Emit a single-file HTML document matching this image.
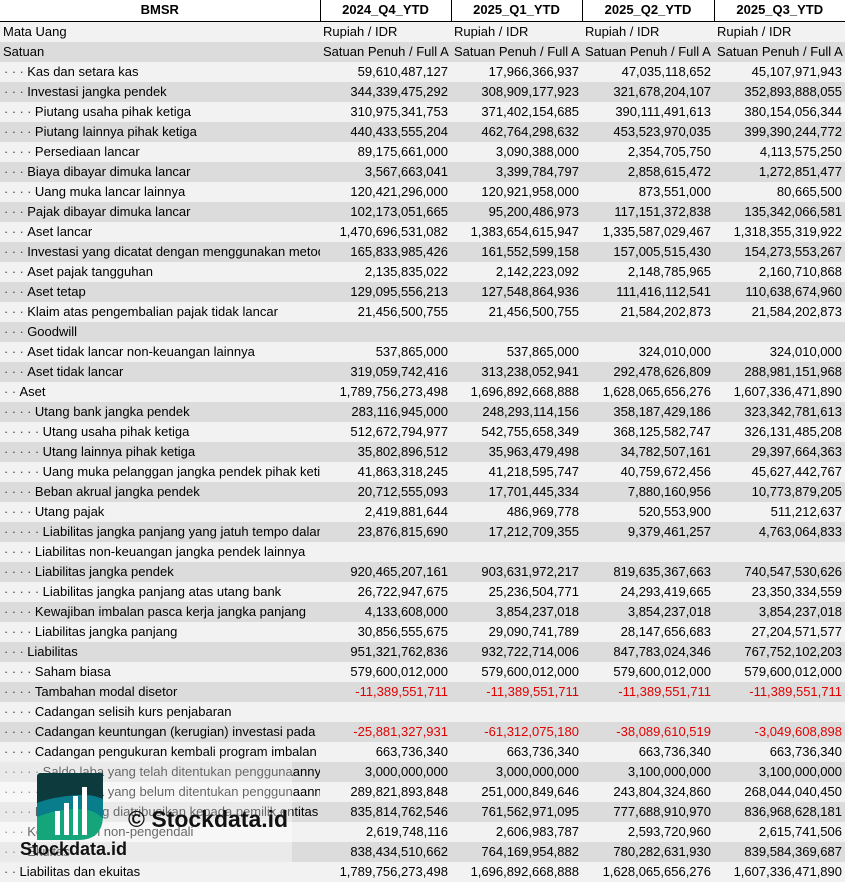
<!DOCTYPE html>
<html><head><meta charset="utf-8"><style>
*{margin:0;padding:0;box-sizing:border-box}
body{width:845px;height:881px;overflow:hidden;background:#fff;font-family:"Liberation Sans",sans-serif;font-size:13px;color:#000;position:relative}
table{border-collapse:collapse;table-layout:fixed;width:845px}
td,th{height:20px;white-space:nowrap;overflow:hidden;padding:0 3px;line-height:20px}
th{font-weight:bold;text-align:center;border-left:1.5px solid #000;border-bottom:1.5px solid #000;height:21px;background:#fff}
th:first-child{border-left:none}
td.n{text-align:right}
tr:nth-child(even) td{background:#f2f2f2}
tr:nth-child(odd) td{background:#dcdcdc}
.r{color:#e00000}
.d{display:inline-block;letter-spacing:3.4px;color:#444;margin-left:1px}
</style></head><body>
<table>
<colgroup><col style="width:320px"><col style="width:131px"><col style="width:131px"><col style="width:132px"><col style="width:131px"></colgroup>
<tr><th>BMSR</th><th>2024_Q4_YTD</th><th>2025_Q1_YTD</th><th>2025_Q2_YTD</th><th>2025_Q3_YTD</th></tr>
<tr><td>Mata Uang</td><td>Rupiah / IDR</td><td>Rupiah / IDR</td><td>Rupiah / IDR</td><td>Rupiah / IDR</td></tr>
<tr><td>Satuan</td><td>Satuan Penuh / Full A</td><td>Satuan Penuh / Full A</td><td>Satuan Penuh / Full A</td><td>Satuan Penuh / Full A</td></tr>
<tr><td><span class="d">···</span>Kas dan setara kas</td><td class="n">59,610,487,127</td><td class="n">17,966,366,937</td><td class="n">47,035,118,652</td><td class="n">45,107,971,943</td></tr>
<tr><td><span class="d">···</span>Investasi jangka pendek</td><td class="n">344,339,475,292</td><td class="n">308,909,177,923</td><td class="n">321,678,204,107</td><td class="n">352,893,888,055</td></tr>
<tr><td><span class="d">····</span>Piutang usaha pihak ketiga</td><td class="n">310,975,341,753</td><td class="n">371,402,154,685</td><td class="n">390,111,491,613</td><td class="n">380,154,056,344</td></tr>
<tr><td><span class="d">····</span>Piutang lainnya pihak ketiga</td><td class="n">440,433,555,204</td><td class="n">462,764,298,632</td><td class="n">453,523,970,035</td><td class="n">399,390,244,772</td></tr>
<tr><td><span class="d">····</span>Persediaan lancar</td><td class="n">89,175,661,000</td><td class="n">3,090,388,000</td><td class="n">2,354,705,750</td><td class="n">4,113,575,250</td></tr>
<tr><td><span class="d">···</span>Biaya dibayar dimuka lancar</td><td class="n">3,567,663,041</td><td class="n">3,399,784,797</td><td class="n">2,858,615,472</td><td class="n">1,272,851,477</td></tr>
<tr><td><span class="d">····</span>Uang muka lancar lainnya</td><td class="n">120,421,296,000</td><td class="n">120,921,958,000</td><td class="n">873,551,000</td><td class="n">80,665,500</td></tr>
<tr><td><span class="d">···</span>Pajak dibayar dimuka lancar</td><td class="n">102,173,051,665</td><td class="n">95,200,486,973</td><td class="n">117,151,372,838</td><td class="n">135,342,066,581</td></tr>
<tr><td><span class="d">···</span>Aset lancar</td><td class="n">1,470,696,531,082</td><td class="n">1,383,654,615,947</td><td class="n">1,335,587,029,467</td><td class="n">1,318,355,319,922</td></tr>
<tr><td><span class="d">···</span>Investasi yang dicatat dengan menggunakan metode</td><td class="n">165,833,985,426</td><td class="n">161,552,599,158</td><td class="n">157,005,515,430</td><td class="n">154,273,553,267</td></tr>
<tr><td><span class="d">···</span>Aset pajak tangguhan</td><td class="n">2,135,835,022</td><td class="n">2,142,223,092</td><td class="n">2,148,785,965</td><td class="n">2,160,710,868</td></tr>
<tr><td><span class="d">···</span>Aset tetap</td><td class="n">129,095,556,213</td><td class="n">127,548,864,936</td><td class="n">111,416,112,541</td><td class="n">110,638,674,960</td></tr>
<tr><td><span class="d">···</span>Klaim atas pengembalian pajak tidak lancar</td><td class="n">21,456,500,755</td><td class="n">21,456,500,755</td><td class="n">21,584,202,873</td><td class="n">21,584,202,873</td></tr>
<tr><td><span class="d">···</span>Goodwill</td><td></td><td></td><td></td><td></td></tr>
<tr><td><span class="d">···</span>Aset tidak lancar non-keuangan lainnya</td><td class="n">537,865,000</td><td class="n">537,865,000</td><td class="n">324,010,000</td><td class="n">324,010,000</td></tr>
<tr><td><span class="d">···</span>Aset tidak lancar</td><td class="n">319,059,742,416</td><td class="n">313,238,052,941</td><td class="n">292,478,626,809</td><td class="n">288,981,151,968</td></tr>
<tr><td><span class="d">··</span>Aset</td><td class="n">1,789,756,273,498</td><td class="n">1,696,892,668,888</td><td class="n">1,628,065,656,276</td><td class="n">1,607,336,471,890</td></tr>
<tr><td><span class="d">····</span>Utang bank jangka pendek</td><td class="n">283,116,945,000</td><td class="n">248,293,114,156</td><td class="n">358,187,429,186</td><td class="n">323,342,781,613</td></tr>
<tr><td><span class="d">·····</span>Utang usaha pihak ketiga</td><td class="n">512,672,794,977</td><td class="n">542,755,658,349</td><td class="n">368,125,582,747</td><td class="n">326,131,485,208</td></tr>
<tr><td><span class="d">·····</span>Utang lainnya pihak ketiga</td><td class="n">35,802,896,512</td><td class="n">35,963,479,498</td><td class="n">34,782,507,161</td><td class="n">29,397,664,363</td></tr>
<tr><td><span class="d">·····</span>Uang muka pelanggan jangka pendek pihak ketiga</td><td class="n">41,863,318,245</td><td class="n">41,218,595,747</td><td class="n">40,759,672,456</td><td class="n">45,627,442,767</td></tr>
<tr><td><span class="d">····</span>Beban akrual jangka pendek</td><td class="n">20,712,555,093</td><td class="n">17,701,445,334</td><td class="n">7,880,160,956</td><td class="n">10,773,879,205</td></tr>
<tr><td><span class="d">····</span>Utang pajak</td><td class="n">2,419,881,644</td><td class="n">486,969,778</td><td class="n">520,553,900</td><td class="n">511,212,637</td></tr>
<tr><td><span class="d">·····</span>Liabilitas jangka panjang yang jatuh tempo dalam</td><td class="n">23,876,815,690</td><td class="n">17,212,709,355</td><td class="n">9,379,461,257</td><td class="n">4,763,064,833</td></tr>
<tr><td><span class="d">····</span>Liabilitas non-keuangan jangka pendek lainnya</td><td></td><td></td><td></td><td></td></tr>
<tr><td><span class="d">····</span>Liabilitas jangka pendek</td><td class="n">920,465,207,161</td><td class="n">903,631,972,217</td><td class="n">819,635,367,663</td><td class="n">740,547,530,626</td></tr>
<tr><td><span class="d">·····</span>Liabilitas jangka panjang atas utang bank</td><td class="n">26,722,947,675</td><td class="n">25,236,504,771</td><td class="n">24,293,419,665</td><td class="n">23,350,334,559</td></tr>
<tr><td><span class="d">····</span>Kewajiban imbalan pasca kerja jangka panjang</td><td class="n">4,133,608,000</td><td class="n">3,854,237,018</td><td class="n">3,854,237,018</td><td class="n">3,854,237,018</td></tr>
<tr><td><span class="d">····</span>Liabilitas jangka panjang</td><td class="n">30,856,555,675</td><td class="n">29,090,741,789</td><td class="n">28,147,656,683</td><td class="n">27,204,571,577</td></tr>
<tr><td><span class="d">···</span>Liabilitas</td><td class="n">951,321,762,836</td><td class="n">932,722,714,006</td><td class="n">847,783,024,346</td><td class="n">767,752,102,203</td></tr>
<tr><td><span class="d">····</span>Saham biasa</td><td class="n">579,600,012,000</td><td class="n">579,600,012,000</td><td class="n">579,600,012,000</td><td class="n">579,600,012,000</td></tr>
<tr><td><span class="d">····</span>Tambahan modal disetor</td><td class="n r">-11,389,551,711</td><td class="n r">-11,389,551,711</td><td class="n r">-11,389,551,711</td><td class="n r">-11,389,551,711</td></tr>
<tr><td><span class="d">····</span>Cadangan selisih kurs penjabaran</td><td></td><td></td><td></td><td></td></tr>
<tr><td><span class="d">····</span>Cadangan keuntungan (kerugian) investasi pada</td><td class="n r">-25,881,327,931</td><td class="n r">-61,312,075,180</td><td class="n r">-38,089,610,519</td><td class="n r">-3,049,608,898</td></tr>
<tr><td><span class="d">····</span>Cadangan pengukuran kembali program imbalan</td><td class="n">663,736,340</td><td class="n">663,736,340</td><td class="n">663,736,340</td><td class="n">663,736,340</td></tr>
<tr><td><span class="d">·····</span>Saldo laba yang telah ditentukan penggunaannya</td><td class="n">3,000,000,000</td><td class="n">3,000,000,000</td><td class="n">3,100,000,000</td><td class="n">3,100,000,000</td></tr>
<tr><td><span class="d">·····</span>Saldo laba yang belum ditentukan penggunaannya</td><td class="n">289,821,893,848</td><td class="n">251,000,849,646</td><td class="n">243,804,324,860</td><td class="n">268,044,040,450</td></tr>
<tr><td><span class="d">····</span>Ekuitas yang diatribusikan kepada pemilik entitas</td><td class="n">835,814,762,546</td><td class="n">761,562,971,095</td><td class="n">777,688,910,970</td><td class="n">836,968,628,181</td></tr>
<tr><td><span class="d">···</span>Kepentingan non-pengendali</td><td class="n">2,619,748,116</td><td class="n">2,606,983,787</td><td class="n">2,593,720,960</td><td class="n">2,615,741,506</td></tr>
<tr><td><span class="d">···</span>Ekuitas</td><td class="n">838,434,510,662</td><td class="n">764,169,954,882</td><td class="n">780,282,631,930</td><td class="n">839,584,369,687</td></tr>
<tr><td><span class="d">··</span>Liabilitas dan ekuitas</td><td class="n">1,789,756,273,498</td><td class="n">1,696,892,668,888</td><td class="n">1,628,065,656,276</td><td class="n">1,607,336,471,890</td></tr>
</table>
<div style="position:absolute;left:0;top:762px;width:292px;height:100px;background:rgba(255,255,255,0.4)"></div>
<svg style="position:absolute;left:37px;top:773px" width="66" height="67" viewBox="0 0 66 67">
<defs><clipPath id="c"><path d="M4 0H66V42Q66 67 41 67H0V4Q0 0 4 0Z"/></clipPath></defs>
<g clip-path="url(#c)">
<rect x="0" y="0" width="66" height="67" fill="#14a67a"/>
<path d="M0 0H66V46Q58 36 40 36Q20 36 0 44Z" fill="#0a7d8c"/>
<path d="M0 0H66V26Q56 21 40 22Q15 24 0 30Z" fill="#0d3a3c"/>
</g>
<rect x="18" y="38" width="5" height="24" fill="#fff"/>
<rect x="27" y="30" width="5" height="32" fill="#fff"/>
<rect x="36" y="23" width="5" height="39" fill="#fff"/>
<rect x="45" y="14" width="5" height="48" fill="#fff"/>
</svg>
<div style="position:absolute;left:128px;top:806px;font-weight:bold;font-size:23px;color:#111">© Stockdata.id</div>
<div style="position:absolute;left:20px;top:839px;font-weight:bold;font-size:18px;color:#111">Stockdata.id</div>
</body></html>
